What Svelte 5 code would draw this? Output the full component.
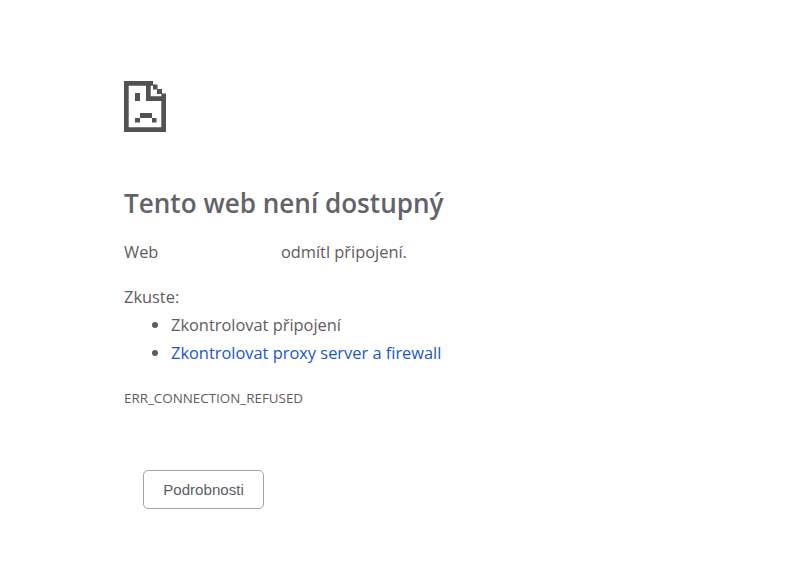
<script>
    const tips = [
        { label: 'Zkontrolovat připojení', link: false },
        { label: 'Zkontrolovat proxy server a firewall', link: true }
    ];
</script>

<div class="page">
    <svg class="icon" width="42" height="51" viewBox="0 0 42 51" aria-hidden="true">
        <path fill="#525252" fill-rule="evenodd" d="M0 0H29V3.500H33.500V8H38V12.500H42V51H0ZM4.700 4.700V46.300H37.300V20H22V4.700ZM26.700 4.700V15.300H37.300V13H33V8.500H29V4.700Z" />
        <path fill="#525252" d="M11 12H16V20H11ZM16 32H28V37H16ZM11 37H16V41.500H11ZM28 37H32.500V41.500H28Z" />
    </svg>

    <h1>Tento web není dostupný</h1>
    <p class="summary">Web <span class="hidden-host"></span> odmítl připojení.</p>

    <p class="try">Zkuste:</p>
    <ul>
        {#each tips as tip}
            <li><span class:link={tip.link}>{tip.label}</span></li>
        {/each}
    </ul>

    <div class="code">ERR_CONNECTION_REFUSED</div>

    <button type="button">Podrobnosti</button>
</div>

<style>
    :global(body) {
        background: #fff;
    }

    .page {
        padding: 81px 0 0 124px;
        color: #5f5c5e;
        font-family: "Open Sans", sans-serif;
        font-size: 16.400px;
    }

    .icon {
        display: block;
    }

    h1 {
        margin: 53px 0 0;
        color: #626368;
        font-size: 26.100px;
        font-weight: 600;
        line-height: 36px;
    }

    .summary {
        margin: 19px 0 0;
        line-height: 24px;
    }

    .hidden-host {
        display: inline-block;
        width: 114px;
    }

    .try {
        margin: 21px 0 0;
        line-height: 24px;
    }

    ul {
        margin: 2px 0 0;
        padding: 0 0 0 47px;
    }

    li {
        line-height: 28px;
    }

    .link {
        color: #1a56c9;
    }

    .code {
        margin-top: 22px;
        font-size: 13.400px;
        line-height: 18px;
    }

    button {
        display: block;
        margin: 63px 0 0 19px;
        width: 121px;
        height: 39px;
        padding: 0;
        background: #fff;
        border: 1px solid #a3a3a8;
        border-radius: 5px;
        color: #5b5e66;
        font-family: "Liberation Sans", Arial, sans-serif;
        font-size: 15.100px;
    }
</style>
